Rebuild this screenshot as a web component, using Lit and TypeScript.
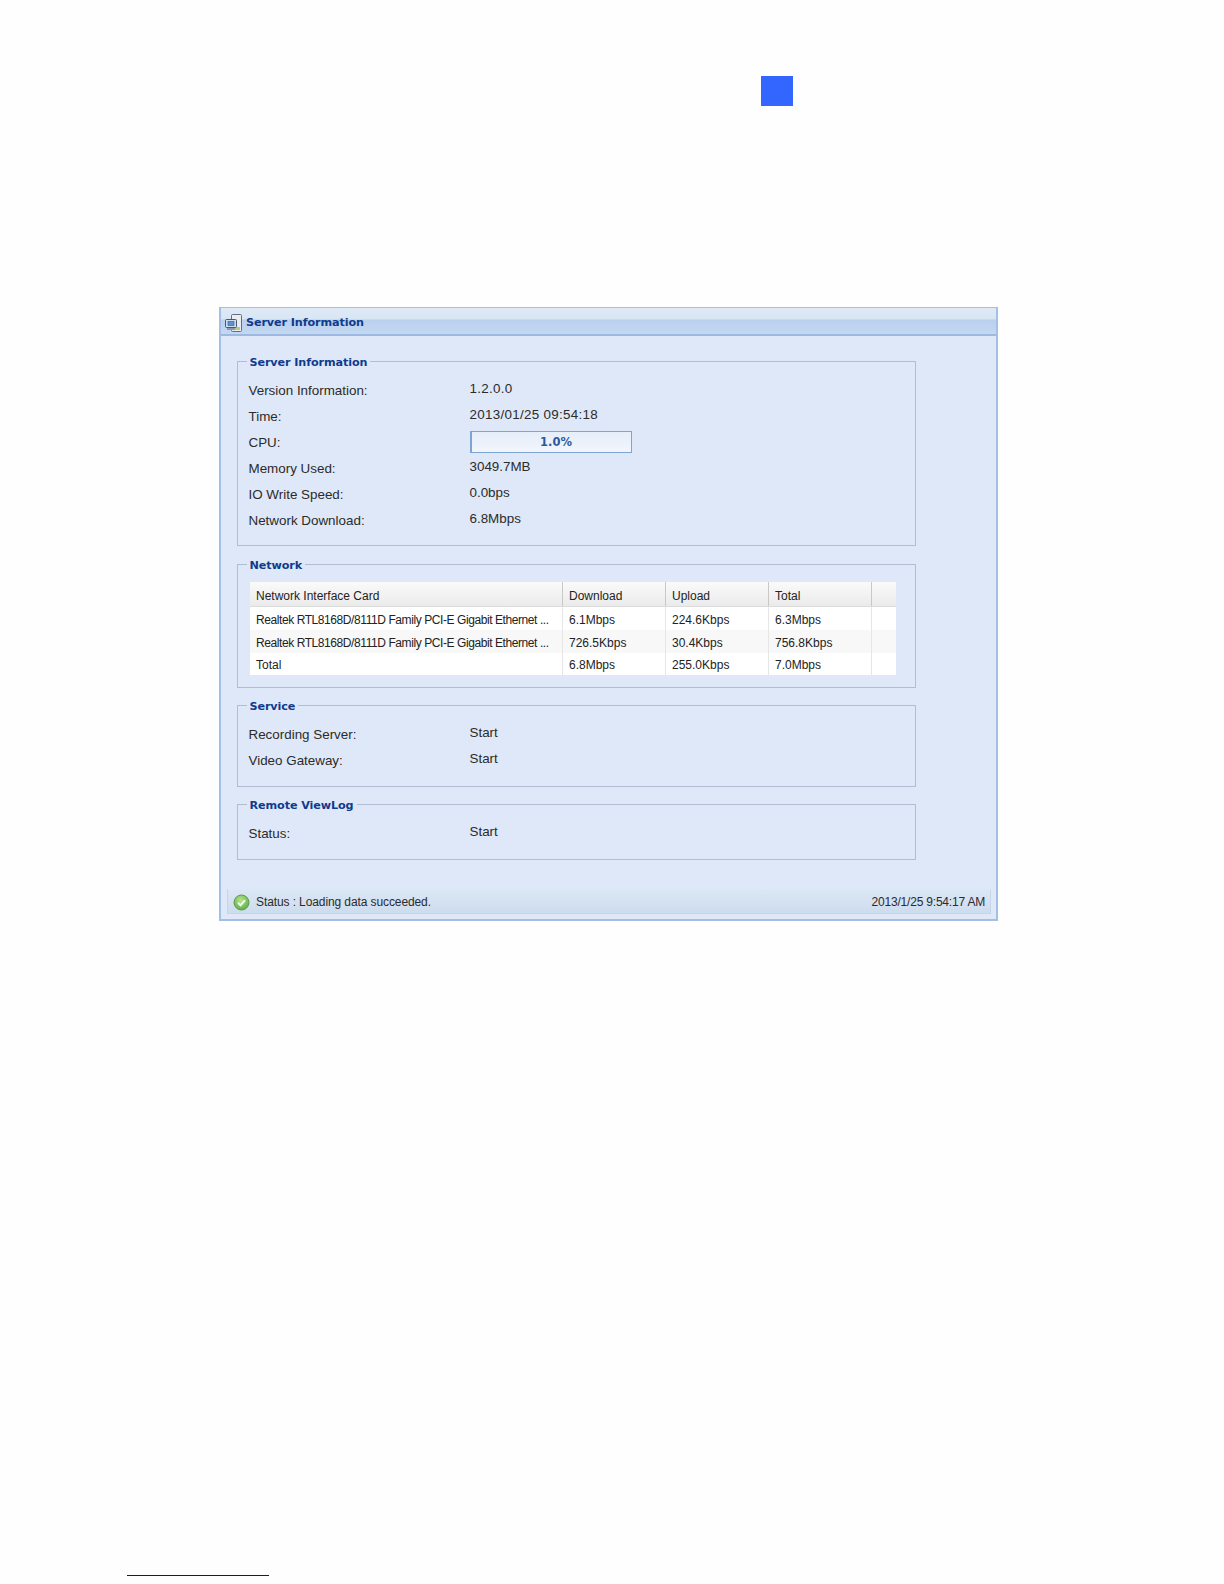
import { LitElement, html, css, svg } from "lit";
import { customElement } from "lit/decorators.js";

const serverIcon = svg`<svg width="20" height="20" viewBox="0 0 20 20">
  <rect x="7.5" y="1.5" width="10" height="17" rx="1" fill="#e9edf0" stroke="#5f6f80"/>
  <rect x="11" y="14" width="5" height="3" fill="#b6c98a"/>
  <rect x="1.5" y="6.5" width="11" height="8" rx="1" fill="#cfdceb" stroke="#45586e"/>
  <rect x="4" y="8.5" width="6" height="4" fill="#5b93cf" stroke="#2f5d90" stroke-width=".6"/>
  <rect x="3" y="15" width="8" height="2" fill="#8a98a8"/>
</svg>`;

const okIcon = svg`<svg width="17" height="17" viewBox="0 0 17 17">
  <defs><radialGradient id="g" cx=".45" cy=".35" r=".75"><stop offset="0" stop-color="#b8e48e"/><stop offset="1" stop-color="#4fa83c"/></radialGradient></defs>
  <circle cx="8.5" cy="8.5" r="7.5" fill="url(#g)" stroke="#5a9a4a"/>
  <path d="M5 8.8 L7.6 11.2 L12 6.2" fill="none" stroke="#f4fbee" stroke-width="2"/>
</svg>`;

const rows = [
  ["Realtek RTL8168D/8111D Family PCI-E Gigabit Ethernet ...", "6.1Mbps", "224.6Kbps", "6.3Mbps"],
  ["Realtek RTL8168D/8111D Family PCI-E Gigabit Ethernet ...", "726.5Kbps", "30.4Kbps", "756.8Kbps"],
  ["Total", "6.8Mbps", "255.0Kbps", "7.0Mbps"],
];

@customElement("app-root")
export class AppRoot extends LitElement {
  static styles = css`
    :host { display: block; height: 1584px; background: #fefefe; overflow: hidden; font-family: "Liberation Sans", Arial, sans-serif; }
    .page { display: flex; flex-direction: column; height: 1584px; box-sizing: border-box; padding: 76px 0 0 0; }
    .marker { width: 32px; height: 30px; background: #3366ff; margin-left: 761px; flex: none; }
    .window { flex: none; width: 779px; height: 614px; box-sizing: border-box; margin: 201px 0 0 219px; border: 2px solid #a3bfe6; border-top: 1px solid #adbfdc; background: #dfe8f8; display: flex; flex-direction: column; }
    .title { flex: none; height: 28px; box-sizing: border-box; border-bottom: 2px solid #9db9e2; background: linear-gradient(#dfe9f6 0, #d8e6f4 42%, #b9d0ee 46%, #c4d8f2 100%); display: flex; align-items: center; gap: 2px; padding: 4px 0 0 3px; }
    .title-text, legend { font: bold 11.2px/14px "DejaVu Sans", sans-serif; color: #0f3b8c; letter-spacing: -0.1px; }
    .body { flex: 1; display: flex; flex-direction: column; padding: 16px 0 0 16px; gap: 8px; }
    fieldset { margin: 0; width: 679px; box-sizing: border-box; border: 1px solid #b0bdd2; padding: 8px 0 12px 10.5px; min-width: 0; }
    fieldset.first { padding-bottom: 11px; }
    legend { padding: 4px 3px 0; margin-left: -2px; }
    .row { display: grid; grid-template-columns: 221px 1fr; height: 26px; align-items: center; font: 13.4px/16px "Liberation Sans", sans-serif; color: #2b2b2b; }
    .value { padding-bottom: 4px; }
    .value.wide { letter-spacing: 0.3px; }
    .bar { width: 162px; height: 22px; margin-bottom: 2px; box-sizing: border-box; border: 1px solid #7ea5d2; border-left: 2px solid #7ea5d2; background: linear-gradient(#e6eefa, #f1f5fc); display: flex; align-items: center; justify-content: center; padding-left: 10px; font: bold 11.5px/14px "DejaVu Sans", sans-serif; color: #2a5a9c; }
    fieldset.net { padding-top: 9px; margin-top: 1px; }
    .table { width: 646px; margin-left: 1.5px; background: #fff; font: 12px/14px "Liberation Sans", sans-serif; color: #222; }
    .tr { display: grid; grid-template-columns: 313px 103px 103px 103px 24px; align-items: center; height: 23px; }
    .tr.head { height: 25px; background: linear-gradient(#fafafa, #ebebeb); border-bottom: 1px solid #dcdcdc; box-sizing: border-box; }
    .tr.alt { background: #f8f8f8; }
    .tr:last-child { height: 22px; }
    .tr > div { padding: 2px 0 0 6px; height: 100%; display: flex; align-items: center; box-sizing: border-box; white-space: nowrap; overflow: hidden; }
    .tr.head > div { padding-top: 3px; }
    .tr > div:not(:last-child) { border-right: 1px solid #e6e6e6; }
    .tr.head > div:not(:last-child) { border-right: 1px solid #c8c8c8; }
    .tr > div.long { letter-spacing: -0.42px; }
    .status { flex: none; height: 25px; box-sizing: border-box; margin: 0 5px 5px 6px; border: 1px solid #c6d4e8; border-top-color: #dde7f4; background: linear-gradient(#dce7f5, #cddcee); display: flex; align-items: center; padding: 1px 5px 0 5px; gap: 6px; font: 12px/14px "Liberation Sans", sans-serif; color: #2b2b2b; letter-spacing: -0.1px; }
    .status .time { margin-left: auto; letter-spacing: -0.2px; }
    .rule { width: 142px; height: 1px; background: #10108c; margin: auto 0 8px 127px; flex: none; }
  `;

  private row(label: string, value: string, wide = false) {
    return html`<div class="row"><div>${label}</div><div class="value ${wide ? "wide" : ""}">${value}</div></div>`;
  }

  render() {
    return html`<div class="page">
      <div class="marker"></div>
      <div class="window">
        <div class="title">${serverIcon}<span class="title-text">Server Information</span></div>
        <div class="body">
          <fieldset class="first">
            <legend>Server Information</legend>
            ${this.row("Version Information:", "1.2.0.0", true)}
            ${this.row("Time:", "2013/01/25 09:54:18", true)}
            <div class="row"><div>CPU:</div><div class="bar">1.0%</div></div>
            ${this.row("Memory Used:", "3049.7MB")}
            ${this.row("IO Write Speed:", "0.0bps")}
            ${this.row("Network Download:", "6.8Mbps")}
          </fieldset>
          <fieldset class="net">
            <legend>Network</legend>
            <div class="table">
              <div class="tr head"><div>Network Interface Card</div><div>Download</div><div>Upload</div><div>Total</div><div></div></div>
              ${rows.map((r, i) => html`<div class="tr ${i === 1 ? "alt" : ""}">${r.map((c, j) => html`<div class=${j === 0 && i < 2 ? "long" : ""}>${c}</div>`)}<div></div></div>`)}
            </div>
          </fieldset>
          <fieldset>
            <legend>Service</legend>
            ${this.row("Recording Server:", "Start")}
            ${this.row("Video Gateway:", "Start")}
          </fieldset>
          <fieldset>
            <legend>Remote ViewLog</legend>
            ${this.row("Status:", "Start")}
          </fieldset>
        </div>
        <div class="status">${okIcon}<span>Status : Loading data succeeded.</span><span class="time">2013/1/25 9:54:17 AM</span></div>
      </div>
      <div class="rule"></div>
    </div>`;
  }
}
